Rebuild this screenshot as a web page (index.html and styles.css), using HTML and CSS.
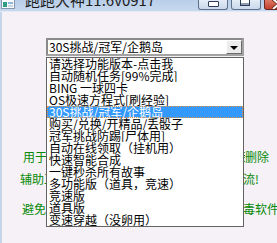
FILE: index.html
```html
<!DOCTYPE html>
<html lang="zh-CN">
<head>
<meta charset="utf-8">
<title>跑跑大神</title>
<link rel="stylesheet" href="styles.css">
</head>
<body>
<div class="window">
  <div class="titlebar">
    <svg class="app-icon" width="14" height="9" viewBox="0 0 14 9">
      <rect x="0.5" y="-2" width="13" height="10.5" fill="#f6f8fa" stroke="#8797ad"/>
      <rect x="2" y="2" width="4" height="5" fill="#2f9c84"/>
      <rect x="7" y="2" width="5" height="2" fill="#8fb7d8"/>
      <rect x="7" y="5" width="5" height="2" fill="#c9d6e3"/>
    </svg>
    <span class="title">跑跑大神11.6v0917</span>
    <div class="caption-buttons">
      <div class="cbtn cbtn-min"><span class="glyph-min"></span></div>
      <div class="cbtn cbtn-max"><span class="glyph-max"></span></div>
      <div class="cbtn cbtn-close">
        <svg class="glyph-close" width="14" height="9" viewBox="0 0 14 9">
          <path d="M1 -1 L7 4 L13 -1 M1 9 L7 4 L13 9" stroke="#5a1d14" stroke-width="3.4" fill="none"/>
          <path d="M1 -1 L7 4 L13 -1 M1 9 L7 4 L13 9" stroke="#ffffff" stroke-width="2" fill="none"/>
        </svg>
      </div>
    </div>
  </div>
  <div class="client">
    <div class="combo">
      <span class="combo-text">30S挑战/冠军/企鹅岛</span>
      <span class="combo-btn"><span class="arrow"></span></span>
    </div>
    <div class="notes">
      <div class="note note-1"><span class="note-l">用于学习交流，请勿用于商业用途，下载后请</span><span class="note-r">删除</span></div>
      <div class="note note-2"><span class="note-l">辅助工具完全免费，欢迎加入官方群一起交</span><span class="note-r">流!</span></div>
      <div class="note note-3"><span class="note-l">避免误报，使用前请先退出所有杀</span><span class="note-r">毒软件</span></div>
    </div>
    <ul class="dropdown">
      <li>请选择功能版本-点击我</li>
      <li>自动随机任务[99%完成]</li>
      <li>BING 一球四卡</li>
      <li>OS极速方程式[刷经验]</li>
      <li class="selected">30S挑战/冠军/企鹅岛</li>
      <li>购买/兑换/开精品/丢骰子</li>
      <li>冠军挑战防踢[尸体用]</li>
      <li>自动在线领取（挂机用）</li>
      <li>快速智能合成</li>
      <li>一键秒杀所有故事</li>
      <li>多功能版（道具，竞速）</li>
      <li>竞速版</li>
      <li>道具版</li>
      <li>变速穿越（没卵用）</li>
    </ul>
  </div>
</div>
</body>
</html>
```

FILE: styles.css
```css
* { box-sizing: border-box; }

html, body {
  margin: 0;
  padding: 0;
  width: 277px;
  height: 243px;
  overflow: hidden;
  background: #f5f1f6;
}

.window {
  width: 277px;
  height: 243px;
  overflow: hidden;
  font-family: "Noto Sans CJK SC", sans-serif;
}

/* ---------- title bar ---------- */
.titlebar {
  height: 12px;
  display: flex;
  align-items: flex-end;
  background: linear-gradient(to bottom, #b8cee9, #c7d9ef);
  border-bottom: 1px solid #e2eaf5;
}

.app-icon {
  align-self: flex-start;
  margin-left: 1px;
  flex: none;
}

.title {
  margin-left: 10px;
  font-size: 15px;
  line-height: 15px;
  padding-bottom: 4px;
  color: #1d1d1d;
  white-space: nowrap;
  flex: none;
}

.caption-buttons {
  align-self: flex-start;
  margin-left: auto;
  margin-right: -31px;
  display: flex;
  gap: 3px;
  flex: none;
}

.cbtn {
  height: 10px;
  border: 1px solid #5f708a;
  border-top: none;
  border-radius: 0 0 3px 3px;
  background: linear-gradient(to bottom, #e4ecf6, #c9d8ea);
  display: flex;
  justify-content: center;
  align-items: flex-start;
}

.cbtn-min { width: 30px; padding-top: 1px; }
.cbtn-max { width: 30px; }
.cbtn-close {
  width: 44px;
  background: linear-gradient(to bottom, #dc7a66, #c3402c);
  border-color: #6b2a20;
  justify-content: flex-start;
  padding-left: 7px;
}

.glyph-min {
  display: block;
  width: 11px;
  height: 6px;
  border: 1px solid #2c3c55;
  border-radius: 1px;
  background: #ffffff;
}

.glyph-max {
  display: block;
  width: 10px;
  height: 6px;
  margin-right: 2px;
  border: 1px solid #2c3c55;
  border-top: none;
  background: #ffffff;
  box-shadow: inset 0 -2px 0 #8e9bb0;
}

.glyph-close { display: block; }

/* ---------- client area ---------- */
.client {
  position: relative;
  height: 231px;
  padding-top: 26px;
  border-left: 2px solid #c6d5ea;
  background: #f5f1f6;
}

.combo {
  margin-left: 44px;
  width: 198px;
  height: 18px;
  border: 2px solid #8a8a8a;
  border-right-color: #a3a3a3;
  border-bottom-color: #a3a3a3;
  background: #ffffff;
  display: flex;
  align-items: center;
}

.combo-text {
  flex: 1;
  padding-left: 1px;
  font-size: 12px;
  line-height: 14px;
  color: #000000;
  white-space: nowrap;
  overflow: hidden;
}

.combo-btn {
  width: 16px;
  height: 14px;
  background: #ececec;
  border: 1px solid;
  border-color: #ffffff #6a6a6a #6a6a6a #ffffff;
  display: flex;
  align-items: center;
  justify-content: center;
}

.arrow {
  width: 0;
  height: 0;
  border-left: 4px solid transparent;
  border-right: 4px solid transparent;
  border-top: 4px solid #000000;
  margin-top: 1px;
}

/* ---------- background notes (partly covered by the open list) ---------- */
.notes {
  padding-top: 95px;
  font-size: 12px;
  line-height: 12px;
  color: #078a07;
}

.note {
  display: grid;
  white-space: nowrap;
}

.note-l { overflow: hidden; }

.note-1 { margin-left: 21px; grid-template-columns: 222px auto; }
.note-2 { margin-left: 18px; margin-top: 10px; grid-template-columns: 223px auto; }
.note-3 { margin-left: 20px; margin-top: 18px; grid-template-columns: 221px auto; }

/* ---------- dropped list (overlay) ---------- */
.dropdown {
  position: absolute;
  left: 44px;
  top: 45px;
  width: 198px;
  height: 170px;
  margin: 0;
  padding: 0;
  list-style: none;
  background: #ffffff;
  border: 1px solid #646464;
  font-size: 12px;
  line-height: 12px;
  color: #000000;
}

.dropdown li {
  height: 12px;
  padding-left: 2px;
  white-space: nowrap;
  overflow: hidden;
}

.dropdown li.selected {
  background: #3399ff;
  color: #ffffff;
  outline: 1px dotted #e3934a;
  outline-offset: -1px;
}
```
